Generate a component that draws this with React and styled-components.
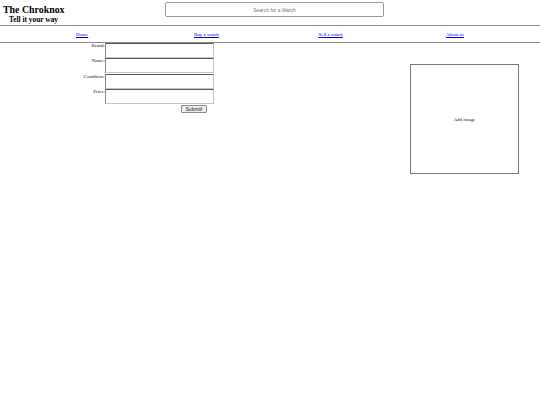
import React from 'react';
import styled, { createGlobalStyle } from 'styled-components';

const GlobalStyle = createGlobalStyle`
  html, body {
    margin: 0;
    padding: 0;
    background: #fff;
    font-family: "Liberation Serif", "Times New Roman", serif;
    color: #000;
  }
`;

const Header = styled.header`
  display: grid;
  grid-template-columns: 165px 219px;
  height: 26px;
  border-bottom: 1px solid #8a8a8a;
  box-sizing: border-box;
`;

const Brand = styled.div`
  padding-left: 3px;
  padding-top: 4px;
`;

const Title = styled.h1`
  margin: 0;
  font-size: 9.9px;
  line-height: 11px;
  font-weight: bold;
`;

const Tagline = styled.h2`
  margin: 0;
  padding-left: 6px;
  font-size: 7.4px;
  line-height: 9px;
  font-weight: bold;
`;

const Search = styled.input`
  margin-top: 2px;
  height: 15px;
  box-sizing: border-box;
  border: 1px solid #9a9a9a;
  border-radius: 2px;
  font-family: "Liberation Sans", Arial, sans-serif;
  font-size: 5px;
  text-align: center;
  padding: 0;
  outline: none;

  &::placeholder {
    color: #777;
  }
`;

const Nav = styled.nav`
  display: grid;
  grid-template-columns: repeat(4, 1fr);
  height: 17px;
  padding: 0 23px 0 20px;
  border-bottom: 1px solid #8a8a8a;
  box-sizing: border-box;
  align-items: center;
`;

const NavLink = styled.a`
  justify-self: center;
  font-size: 5px;
  color: #0000ee;
  text-decoration: underline;
  padding-top: 1px;
`;

const Main = styled.main`
  display: flex;
  justify-content: space-between;
  align-items: flex-start;
`;

const Form = styled.form`
  display: grid;
  grid-template-columns: 105px 109px;
  grid-auto-rows: 15.3px;
  margin: 0;
`;

const Label = styled.label`
  justify-self: end;
  align-self: start;
  font-size: 5px;
  line-height: 6px;
  color: #222;
`;

const Field = styled.input`
  width: 109px;
  height: 15px;
  box-sizing: border-box;
  margin: 0;
  border: 1px solid #c4c4c4;
  border-top-color: #5a5a5a;
  border-left-color: #8a8a8a;
  padding: 0;
`;

const Submit = styled.button`
  grid-column: 2;
  justify-self: end;
  align-self: start;
  margin-right: 7px;
  margin-top: 0.5px;
  height: 8px;
  width: 26px;
  padding: 0;
  font-family: "Liberation Sans", Arial, sans-serif;
  font-size: 5px;
  line-height: 6px;
  background: #efefef;
  border: 1px solid #8a8a8a;
  border-radius: 1px;
  color: #111;
`;

const ImageBox = styled.div`
  width: 109px;
  height: 110px;
  margin-top: 21px;
  margin-right: 21px;
  box-sizing: border-box;
  border: 1px solid #7a7a7a;
  display: flex;
  align-items: center;
  justify-content: center;
  font-size: 5px;
  color: #222;
`;

const fields = ['Brand', 'Name', 'Condition', 'Price'];

export default function App() {
  return (
    <>
      <GlobalStyle />
      <Header>
        <Brand>
          <Title>The Chroknox</Title>
          <Tagline>Tell it your way</Tagline>
        </Brand>
        <Search placeholder="Search for a Watch" />
      </Header>
      <Nav>
        <NavLink href="#">Home</NavLink>
        <NavLink href="#">Buy a watch</NavLink>
        <NavLink href="#">Sell a watch</NavLink>
        <NavLink href="#">About us</NavLink>
      </Nav>
      <Main>
        <Form onSubmit={(e) => e.preventDefault()}>
          {fields.map((f) => (
            <React.Fragment key={f}>
              <Label htmlFor={f}>{f}:</Label>
              <Field id={f} />
            </React.Fragment>
          ))}
          <Submit type="submit">Submit!</Submit>
        </Form>
        <ImageBox>Add image</ImageBox>
      </Main>
    </>
  );
}
